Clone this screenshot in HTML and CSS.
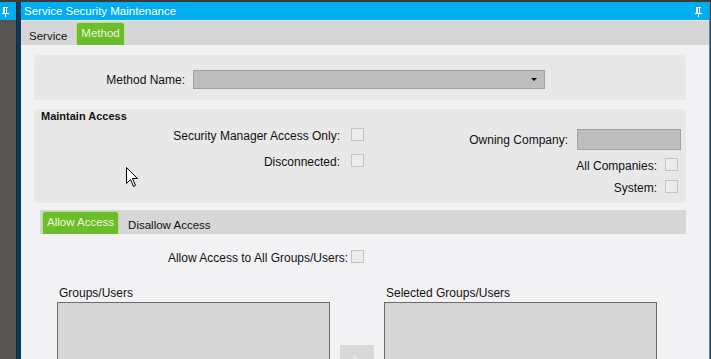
FILE: index.html
```html
<!DOCTYPE html>
<html lang="en">
<head>
    <meta charset="UTF-8">
    <meta name="viewport" content="width=device-width, initial-scale=1.0">
    <title>Service Security Maintenance</title>
    <link rel="stylesheet" href="styles.css">
</head>
<body>
    <div class="screen">
        <div class="dock">
            <div class="dock-title">
                <svg class="pin" width="7" height="10" viewBox="0 0 7 10">
                    <rect x="1" y="0" width="5" height="1" fill="#fff"/>
                    <rect x="1" y="0" width="2" height="6" fill="#fff"/>
                    <rect x="4" y="0" width="1" height="6" fill="#fff"/>
                    <rect x="0" y="6" width="7" height="1" fill="#fff"/>
                    <rect x="3" y="7" width="1" height="3" fill="#fff"/>
                </svg>
            </div>
        </div>
        <div class="splitter"></div>
        <div class="window">
            <div class="title-bar">
                <span>Service Security Maintenance</span>
                <svg class="pin" width="7" height="10" viewBox="0 0 7 10">
                    <rect x="1" y="0" width="5" height="1" fill="#fff"/>
                    <rect x="1" y="0" width="2" height="6" fill="#fff"/>
                    <rect x="4" y="0" width="1" height="6" fill="#fff"/>
                    <rect x="0" y="6" width="7" height="1" fill="#fff"/>
                    <rect x="3" y="7" width="1" height="3" fill="#fff"/>
                </svg>
            </div>
            <div class="tabs">
                <span class="tab">Service</span>
                <span class="tab active">Method</span>
            </div>
            <div class="content">
                <div class="panel method-panel">
                    <label class="method-label">Method Name:</label>
                    <div class="select"><span class="arrow"></span></div>
                </div>
                <div class="panel access-panel">
                    <h2>Maintain Access</h2>
                    <div class="access-body">
                        <div class="access-left">
                            <div class="row"><label>Security Manager Access Only:</label><span class="check"></span></div>
                            <div class="row"><label>Disconnected:</label><span class="check"></span></div>
                        </div>
                        <div class="access-right">
                            <div class="row owning"><label>Owning Company:</label><span class="textbox"></span></div>
                            <div class="row boxed"><label>All Companies:</label><span class="check"></span></div>
                            <div class="row boxed system"><label>System:</label><span class="check"></span></div>
                        </div>
                    </div>
                </div>
                <div class="tabs sub-tabs">
                    <span class="tab active">Allow Access</span>
                    <span class="tab">Disallow Access</span>
                </div>
                <div class="allow-row">
                    <label>Allow Access to All Groups/Users:</label><span class="check"></span>
                </div>
                <div class="lists">
                    <div class="list-group">
                        <div class="list-label">Groups/Users</div>
                        <div class="listbox"></div>
                    </div>
                    <div class="move-col">
                        <div class="move-btn"><span class="move-arrow"></span></div>
                    </div>
                    <div class="list-group">
                        <div class="list-label">Selected Groups/Users</div>
                        <div class="listbox"></div>
                    </div>
                </div>
            </div>
        </div>
    </div>

    <svg class="cursor" width="13" height="21" viewBox="0 0 13 21">
        <path d="M0.5 0.5 L0.5 16.5 L4.5 12.5 L7.5 19.5 L9.5 18.5 L6.5 11.5 L11.5 11.5 Z" fill="#fff" stroke="#000" stroke-width="1"/>
    </svg>
</body>
</html>
```

FILE: styles.css
```css
body {
    margin: 0;
    font-family: "Liberation Sans", Arial, sans-serif;
    font-size: 12px;
    color: #111;
    overflow: hidden;
}
.screen {
    display: flex;
    height: 357px;
    border-top: 2px solid #3a3a3a;
    background: #3f3f3f;
    overflow: hidden;
}
.dock {
    width: 16px;
    flex-shrink: 0;
    background: #555452;
}
.dock-title {
    height: 18px;
    background: #00aeef;
    padding: 5px 0 0 2px;
    box-sizing: border-box;
}
.pin {
    display: block;
}
.splitter {
    width: 4px;
    flex-shrink: 0;
    background: #0b3b5c;
    border-left: 1px solid #1e272e;
}
.window {
    flex: 1;
    margin-right: 1px;
    background: #f2f2f4;
    border-right: 1px solid #2f8fd8;
    min-width: 0;
}
.title-bar {
    height: 18px;
    background: #00aeef;
    color: #fff;
    font-size: 11.5px;
    display: flex;
    align-items: center;
    justify-content: space-between;
    padding: 0 7px 0 3px;
}
.title-bar .pin {
    margin-top: 1px;
}
.tabs {
    height: 25px;
    box-sizing: border-box;
    background: #d6d6d6;
    border-top: 1px solid #e9e9e9;
    display: flex;
    align-items: flex-end;
    gap: 4px;
    padding-left: 3px;
}
.tab {
    height: 23px;
    box-sizing: border-box;
    padding: 6px 5px 0;
    line-height: 17px;
    font-size: 11.5px;
    color: #111;
    white-space: nowrap;
}
.tab.active {
    background: #6bbd2b;
    color: #eef7dc;
    border: 1px solid #b9e196;
    border-bottom: none;
    border-radius: 3px 3px 0 0;
    padding: 2px 4px 0;
}
.content {
    padding: 10px 23px 0 13px;
}
.panel {
    background: #e8e8e8;
    border-radius: 4px;
}
.method-panel {
    height: 45px;
    box-sizing: border-box;
    padding-top: 15px;
    display: flex;
    align-items: flex-start;
}
.method-label {
    width: 151px;
    height: 19px;
    line-height: 21px;
    text-align: right;
    margin-right: 8px;
}
.select {
    width: 352px;
    height: 19px;
    box-sizing: border-box;
    background: #bebebe;
    border: 1px solid #a2a2a2;
    position: relative;
}
.arrow {
    position: absolute;
    right: 7px;
    top: 7px;
    width: 0;
    height: 0;
    border-left: 3px solid transparent;
    border-right: 3px solid transparent;
    border-top: 3px solid #000;
}
.access-panel {
    margin-top: 9px;
    height: 94px;
    box-sizing: border-box;
}
.access-panel h2 {
    margin: 0;
    padding: 1px 7px 0;
    font-size: 11px;
    line-height: 12px;
    font-weight: bold;
    color: #111;
}
.access-body {
    display: flex;
}
.row {
    display: flex;
    justify-content: flex-end;
    align-items: flex-start;
    height: 13px;
}
.row label {
    white-space: nowrap;
    line-height: 16px;
}
.access-left {
    width: 330px;
    padding-top: 6px;
    display: flex;
    flex-direction: column;
    gap: 13px;
}
.access-left .row label {
    margin-right: 11px;
}
.access-right {
    flex: 1;
    padding: 7px 5px 0 0;
}
.owning {
    height: 21px;
}
.owning label {
    margin-right: 9px;
    line-height: 23px;
}
.boxed {
    margin-top: 8px;
    padding-right: 3px;
}
.boxed label {
    margin-right: 8px;
}
.system {
    margin-top: 9px;
}
.check {
    display: block;
    width: 13px;
    height: 13px;
    box-sizing: border-box;
    border: 1px solid #c4c4c4;
    background: #ececec;
    flex-shrink: 0;
}
.textbox {
    display: block;
    width: 104px;
    height: 21px;
    box-sizing: border-box;
    background: #bebebe;
    border: 1px solid #a2a2a2;
}
.sub-tabs {
    margin: 7px 0 0 6px;
    height: 24px;
    border-top: none;
    padding-left: 2px;
}
.allow-row {
    width: 330px;
    margin-top: 16px;
    display: flex;
    justify-content: flex-end;
    align-items: flex-start;
    height: 13px;
}
.allow-row label {
    margin-right: 3px;
    line-height: 16px;
    white-space: nowrap;
}
.lists {
    display: flex;
    margin-top: 23px;
    padding-left: 23px;
}
.list-label {
    line-height: 14px;
    padding-left: 2px;
    margin-bottom: 2px;
    white-space: nowrap;
}
.listbox {
    width: 273px;
    height: 120px;
    box-sizing: border-box;
    background: #d6d6d6;
    border: 1px solid #6b6b6b;
}
.move-col {
    width: 34px;
    margin: 0 10px;
    padding-top: 59px;
}
.move-btn {
    height: 30px;
    background: #d8d8d8;
    position: relative;
}
.move-arrow {
    position: absolute;
    left: 13px;
    top: 9px;
    width: 0;
    height: 0;
    border-top: 7px solid transparent;
    border-bottom: 7px solid transparent;
    border-left: 8px solid #e6e6e6;
}
.cursor {
    position: absolute;
    left: 126px;
    top: 167px;
}
```
